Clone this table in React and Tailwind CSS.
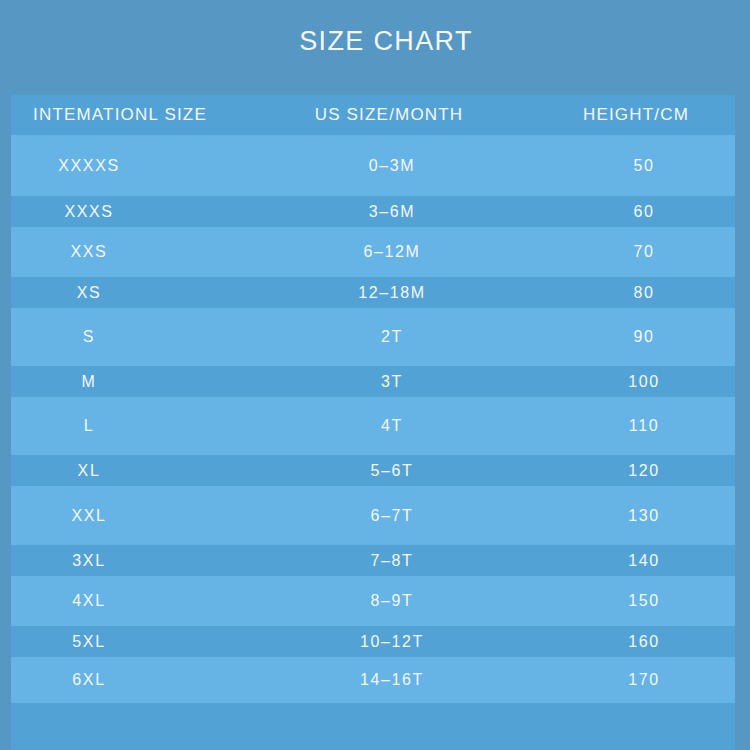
const rows = [
  { a: 'XXXXS', b: '0–3M', c: '50', h: 'h-[61px]', dark: false },
  { a: 'XXXS', b: '3–6M', c: '60', h: 'h-[31px]', dark: true },
  { a: 'XXS', b: '6–12M', c: '70', h: 'h-[50px]', dark: false },
  { a: 'XS', b: '12–18M', c: '80', h: 'h-[31px]', dark: true },
  { a: 'S', b: '2T', c: '90', h: 'h-[58px]', dark: false },
  { a: 'M', b: '3T', c: '100', h: 'h-[31px]', dark: true },
  { a: 'L', b: '4T', c: '110', h: 'h-[58px]', dark: false },
  { a: 'XL', b: '5–6T', c: '120', h: 'h-[31px]', dark: true },
  { a: 'XXL', b: '6–7T', c: '130', h: 'h-[59px]', dark: false },
  { a: '3XL', b: '7–8T', c: '140', h: 'h-[31px]', dark: true },
  { a: '4XL', b: '8–9T', c: '150', h: 'h-[50px]', dark: false },
  { a: '5XL', b: '10–12T', c: '160', h: 'h-[31px]', dark: true },
  { a: '6XL', b: '14–16T', c: '170', h: 'h-[46px]', dark: false },
];

export default function App() {
  return (
    <div
      className="w-[750px] h-[750px] overflow-hidden bg-[#5697c3] text-[#f4f8fb] px-[11px] [font-family:'Liberation_Sans',sans-serif]"
    >
      {/* title */}
      <div className="h-[95px] flex items-center justify-center pb-[12px] pl-[22px]">
        <h1 className="text-[27px] tracking-[0.05em] leading-none font-normal">SIZE CHART</h1>
      </div>

      <div className="w-[724px] h-[655px] bg-[#53a2d5]">
        {/* header */}
        <div className="h-[40px] flex items-center text-[17px] tracking-[0.07em]">
          <div className="w-[218px] text-center whitespace-nowrap">INTEMATIONL SIZE</div>
          <div className="w-[320px] text-center whitespace-nowrap">US SIZE/MONTH</div>
          <div className="w-[174px] text-center whitespace-nowrap">HEIGHT/CM</div>
        </div>

        {rows.map((r) => (
          <div
            key={r.a}
            className={`${r.h} flex items-center text-[16px] tracking-[0.1em] ${r.dark ? 'bg-[#53a2d5]' : 'bg-[#66b3e6]'}`}
          >
            <div className="w-[156px] text-center whitespace-nowrap">{r.a}</div>
            <div className="w-[450px] text-center whitespace-nowrap">{r.b}</div>
            <div className="w-[54px] text-center whitespace-nowrap">{r.c}</div>
          </div>
        ))}
      </div>
    </div>
  );
}
